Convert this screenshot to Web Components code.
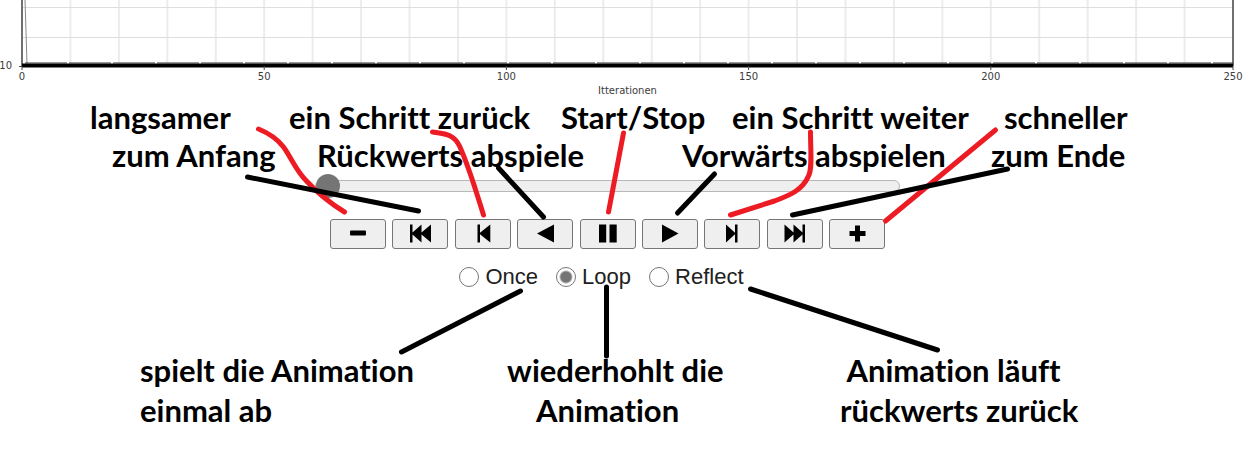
<!DOCTYPE html>
<html lang="de">
<head>
<meta charset="utf-8">
<title>Animation – Bedienung</title>
<style>
  body { margin: 0; background: #fff; color: #000; font-family: Lato, "Open Sans", sans-serif; }
</style>
</head>
<body>
<animation-guide></animation-guide>

<script>
const define = (name, html, setup) => customElements.define(name, class extends HTMLElement {
  constructor() {
    super();
    this.attachShadow({ mode: 'open' }).innerHTML = html;
    if (setup) setup(this, this.shadowRoot);
  }
});

/* Lower edge of the plot with its x axis */
const verticals = Array.from({ length: 24 }, (_, i) => `<line x1="${(i + 1) * 4}%" x2="${(i + 1) * 4}%" y1="0" y2="63"/>`).join('');
const ticks = [0, 50, 100, 150, 200, 250].map(v =>
  `<line class="tick" x1="${v / 2.5}%" x2="${v / 2.5}%" y1="66" y2="70"/><text x="${v / 2.5}%" y="80">${v}</text>`).join('');
define('plot-axis', `
  <style>
    :host { display: block; padding: 0 22px; overflow: hidden; }
    svg { display: block; width: 100%; height: 98px; overflow: visible; }
    text { font: 10px "DejaVu Sans", sans-serif; fill: #3c3c3c; text-anchor: middle; }
    .end { text-anchor: end; }
    .v { stroke: #ececec; stroke-width: 2; }
    .h { stroke: #dedede; }
    .tick { stroke: #444; }
    .spine { stroke: #707070; stroke-width: 2; }
    .curve { stroke: #8a8a8a; }
    .base { stroke: #000; stroke-width: 4; }
    .dots { stroke: #333; stroke-dasharray: 42 2; }
  </style>
  <svg>
    <g class="v">${verticals}</g>
    <g class="h"><line x1="0" x2="100%" y1="7.5" y2="7.5"/><line x1="0" x2="100%" y1="37.5" y2="37.5"/></g>
    <line class="spine" x1="0" x2="0" y1="0" y2="66"/>
    <line class="spine" x1="100%" x2="100%" y1="0" y2="66"/>
    <line class="curve" x1="3" x2="5" y1="0" y2="64"/>
    <line class="tick" x1="-3" x2="0" y1="66.5" y2="66.5"/>
    <line class="base" x1="0" x2="100%" y1="65.5" y2="65.5"/>
    <line class="dots" x1="3" x2="100%" y1="63" y2="63"/>
    ${ticks}
    <text class="end" x="-10" y="69">10</text>
    <text x="50%" y="94">Itterationen</text>
  </svg>`);

/* Player button, glyph chosen by the icon attribute */
const icons = {
  minus: '<rect x="20" y="11.5" width="16" height="5" rx="1"/>',
  first: '<path d="M18 5.5h2.5v8L29.500 5.500v8L39 5.500v18L29.500 15.500v8L20.500 15.500v8H18z"/>',
  back: '<path d="M22.500 5.500H25v8.300L35.300 5.500v18L25 15.200v8.300h-2.500z"/>',
  reverse: '<path d="M37 5.500v18L20 14.500z"/>',
  pause: '<path d="M19 5.500h7.200v18h-7.200zM29.500 5.500h7.200v18h-7.200z"/>',
  play: '<path d="M20 5.500v18l16.500-9z"/>',
  next: '<path d="M33.500 5.500H31v8.300L22 5.500v18l9-8.300v8.300h2.500z"/>',
  last: '<path d="M38 5.500h-2.500v8L26.500 5.500v8L17.500 5.500v18l9-8v8l9-8v8H38z"/>',
  plus: '<path d="M26 6.500h5v5.500h5.500v5H31v5.500h-5V17h-5.500v-5H26z"/>'
};
define('player-button', `
  <style>
    :host { display: block; }
    button { display: block; box-sizing: border-box; width: 56px; height: 30px; padding: 0;
      border: 1px solid #767676; border-radius: 3px; background: #efefef; color: #000; }
    svg { display: block; width: 54px; height: 28px; fill: currentColor; }
  </style>
  <button type="button"><svg viewBox="1 1 54 28" aria-hidden="true"></svg></button>`,
  (host, root) => {
    root.querySelector('svg').innerHTML = icons[host.getAttribute('icon')];
    root.querySelector('button').setAttribute('aria-label', host.getAttribute('label'));
  });

define('frame-slider', `
  <style>
    :host { display: block; width: 585px; max-width: 100%; }
    input { appearance: none; display: block; width: 100%; height: 24px; margin: 0; background: none; }
    input::-webkit-slider-runnable-track { box-sizing: border-box; height: 12px; border: 1px solid #b8b8b8;
      border-radius: 6px; background: #efefef; }
    input::-webkit-slider-thumb { appearance: none; width: 24px; height: 24px; margin-top: -7px;
      border-radius: 50%; background: #757575; }
  </style>
  <input type="range" min="0" max="250" value="0" aria-label="Frame">`);

define('loop-mode', `
  <style>
    :host { display: block; color: #212121; font: 22px/24px "Liberation Sans", Arial, sans-serif; }
    form { display: flex; gap: 18px; padding-right: 12px; }
    label { display: flex; align-items: center; gap: 6px; }
    input { appearance: none; box-sizing: border-box; width: 20px; height: 20px; margin: 0;
      border: 1px solid #767676; border-radius: 50%; background: #fff; }
    input:checked { background: radial-gradient(circle, #757575 5px, #fff 7px); }
  </style>
  <form>
    <label><input type="radio" name="mode">Once</label>
    <label><input type="radio" name="mode" checked>Loop</label>
    <label><input type="radio" name="mode">Reflect</label>
  </form>`);

define('player-controls', `
  <style>
    :host { display: flex; flex-direction: column; align-items: center; }
    .buttons { display: flex; justify-content: space-between; width: 555px; margin: 21px 0 16px; }
  </style>
  <frame-slider></frame-slider>
  <div class="buttons">
    <player-button icon="minus" label="langsamer"></player-button>
    <player-button icon="first" label="zum Anfang"></player-button>
    <player-button icon="back" label="ein Schritt zurück"></player-button>
    <player-button icon="reverse" label="rückwärts abspielen"></player-button>
    <player-button icon="pause" label="Start/Stop"></player-button>
    <player-button icon="play" label="vorwärts abspielen"></player-button>
    <player-button icon="next" label="ein Schritt weiter"></player-button>
    <player-button icon="last" label="zum Ende"></player-button>
    <player-button icon="plus" label="schneller"></player-button>
  </div>
  <loop-mode></loop-mode>`);

/* Row of captions; the columns attribute lists the column widths */
define('caption-row', `
  <style>
    :host { display: grid; justify-content: center; white-space: pre; font-variant-ligatures: none;
      font-size: 31px; font-weight: 700; line-height: var(--line, 38px); }
  </style>
  <slot></slot>`,
  (host) => { host.style.gridTemplateColumns = host.getAttribute('columns'); });

/* Pointer strokes, measured from the middle of the guide */
define('pointer-lines', `
  <style>
    :host { position: absolute; inset: 0; pointer-events: none; }
    svg { display: block; width: 100%; height: 100%; overflow: visible; }
    path { fill: none; stroke: #000; stroke-width: 5; stroke-linecap: round; stroke-linejoin: round; }
    .red { stroke: #ed1c24; }
  </style>
  <svg aria-hidden="true"><svg x="50%" overflow="visible"><g transform="translate(-608 -98)">
    <path class="red" d="M259 129C269 133 277 138 284 147C292 158 296 170 307 181C318 193 332 204 345 212"/>
    <path class="red" d="M433 132C446 134 454 134 460 146C470 168 477 193 484 215"/>
    <path class="red" d="M624 133L609 212"/>
    <path class="red" d="M811 132C811 150 813 169 809 176C803 190 791 195 775 201L731 215"/>
    <path class="red" d="M996 130L886 221"/>
    <path d="M248 177L419 211"/>
    <path d="M499 168L544 217"/>
    <path d="M715 174L678 213"/>
    <path d="M1008 169L793 215"/>
    <path d="M521 291L402 352"/>
    <path d="M607 287V356"/>
    <path d="M751 289L938 350"/>
  </g></svg></svg>`);

define('animation-guide', `
  <style>
    :host { display: block; }
    main { position: relative; margin-right: 40px; }
    .modes { --line: 40px; margin-top: 61px; }
  </style>
  <plot-axis></plot-axis>
  <main>
    <caption-row columns="199px 272px 171px 272px 121px"><span>langsamer</span><span>ein Schritt zurück</span><span>Start/Stop</span><span>ein Schritt weiter</span><span>schneller</span></caption-row>
    <caption-row columns="205px 365px 309px 112px"><span>zum Anfang</span><span>Rückwerts abspiele</span><span>Vorwärts abspielen</span><span>zum Ende</span></caption-row>
    <player-controls></player-controls>
    <caption-row class="modes" columns="367px 333px 235px"><span>spielt die Animation
einmal ab</span><span>wiederhohlt die
    Animation</span><span> Animation läuft
rückwerts zurück</span></caption-row>
    <pointer-lines></pointer-lines>
  </main>`);
</script>
</body>
</html>
